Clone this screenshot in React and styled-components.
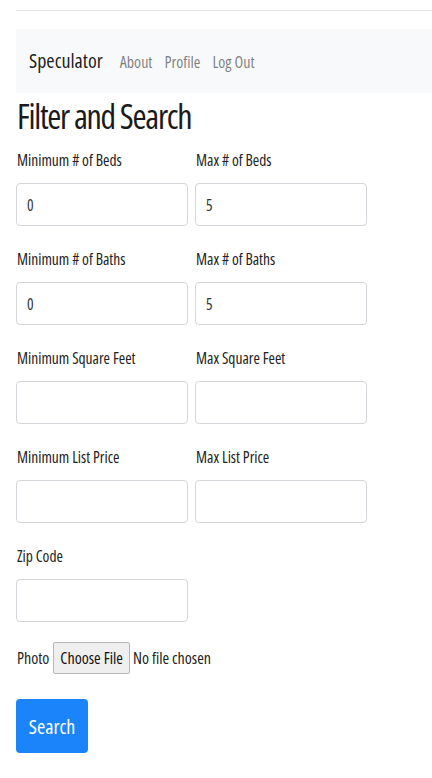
import React from "react";
import styled, { createGlobalStyle } from "styled-components";

const Global = createGlobalStyle`
  html, body { margin: 0; padding: 0; background: #fff; }
  body {
    font-family: "Open Sans", Roboto, "Liberation Sans", sans-serif;
    font-stretch: 75%;
    font-weight: 400;
    color: #212529;
  }
  * { box-sizing: border-box; }
`;

const Page = styled.div`
  padding: 10px 0 0 16px;
`;

const Rule = styled.hr`
  margin: 0;
  border: 0;
  border-top: 1px solid #e4e4e4;
`;

const Navbar = styled.nav`
  margin-top: 18px;
  height: 64px;
  background: #f8f9fa;
  display: flex;
  align-items: center;
  padding-left: 13px;
`;

const Brand = styled.span`
  font-size: 20px;
  color: rgba(0, 0, 0, 0.9);
  margin-right: 17px;
  line-height: 1;
`;

const NavLinks = styled.div`
  display: flex;
  gap: 12px;
  padding-top: 1px;
`;

const NavLink = styled.a`
  font-size: 16px;
  color: rgba(0, 0, 0, 0.5);
  text-decoration: none;
  line-height: 1;
`;

const Heading = styled.h2`
  margin: 2px 0 11px 0;
  font-size: 34px;
  font-weight: 400;
  letter-spacing: -1.3px;
  line-height: 42px;
  color: #1b1b1b;
  padding-left: 1px;
`;

const Grid = styled.div`
  display: grid;
  grid-template-columns: 172px 172px;
  column-gap: 7px;
  row-gap: 21px;
`;

const Field = styled.div`
  display: flex;
  flex-direction: column;
`;

const Label = styled.label`
  font-size: 15.5px;
  line-height: 24px;
  margin-bottom: 11px;
  padding-left: 1px;
  color: #222;
`;

const Input = styled.input`
  height: 43px;
  width: 100%;
  border: 1px solid #d3d7db;
  border-radius: 4px;
  padding: 0 10px;
  font-family: inherit;
  font-stretch: inherit;
  font-weight: inherit;
  font-size: 15.5px;
  color: #33373b;
  background: #fff;
  outline: none;
`;

const PhotoRow = styled.div`
  margin-top: 20px;
  display: flex;
  align-items: center;
  gap: 4px;
  font-size: 16px;
  padding-left: 1px;
`;

const FileInput = styled.input`
  font-family: inherit;
  font-stretch: inherit;
  font-weight: inherit;
  font-size: 16px;
  color: #222;
  &::file-selector-button {
    font-family: inherit;
    font-stretch: inherit;
    font-weight: inherit;
    font-size: 16px;
    height: 32px;
    padding: 0 6px;
    margin-right: 3px;
    background: #efefef;
    border: 1px solid #b7b7b7;
    border-radius: 2px;
    color: #111;
  }
`;

const SearchButton = styled.button`
  margin-top: 25px;
  width: 72px;
  height: 54px;
  border: 0;
  border-radius: 4px;
  background: #1c84fb;
  color: #fff;
  font-family: inherit;
  font-stretch: inherit;
  font-weight: 500;
  font-size: 20px;
  cursor: pointer;
`;

const fields = [
  ["Minimum # of Beds", "0"],
  ["Max # of Beds", "5"],
  ["Minimum # of Baths", "0"],
  ["Max # of Baths", "5"],
  ["Minimum Square Feet", ""],
  ["Max Square Feet", ""],
  ["Minimum List Price", ""],
  ["Max List Price", ""],
  ["Zip Code", ""],
];

export default function App() {
  return (
    <>
      <Global />
      <Page>
        <Rule />
        <Navbar>
          <Brand>Speculator</Brand>
          <NavLinks>
            <NavLink href="#">About</NavLink>
            <NavLink href="#">Profile</NavLink>
            <NavLink href="#">Log Out</NavLink>
          </NavLinks>
        </Navbar>
        <Heading>Filter and Search</Heading>
        <form onSubmit={(e) => e.preventDefault()}>
          <Grid>
            {fields.map(([label, value]) => (
              <Field key={label}>
                <Label>{label}</Label>
                <Input type="text" defaultValue={value} />
              </Field>
            ))}
          </Grid>
          <PhotoRow>
            <span>Photo</span>
            <FileInput type="file" />
          </PhotoRow>
          <SearchButton type="submit">Search</SearchButton>
        </form>
      </Page>
    </>
  );
}
